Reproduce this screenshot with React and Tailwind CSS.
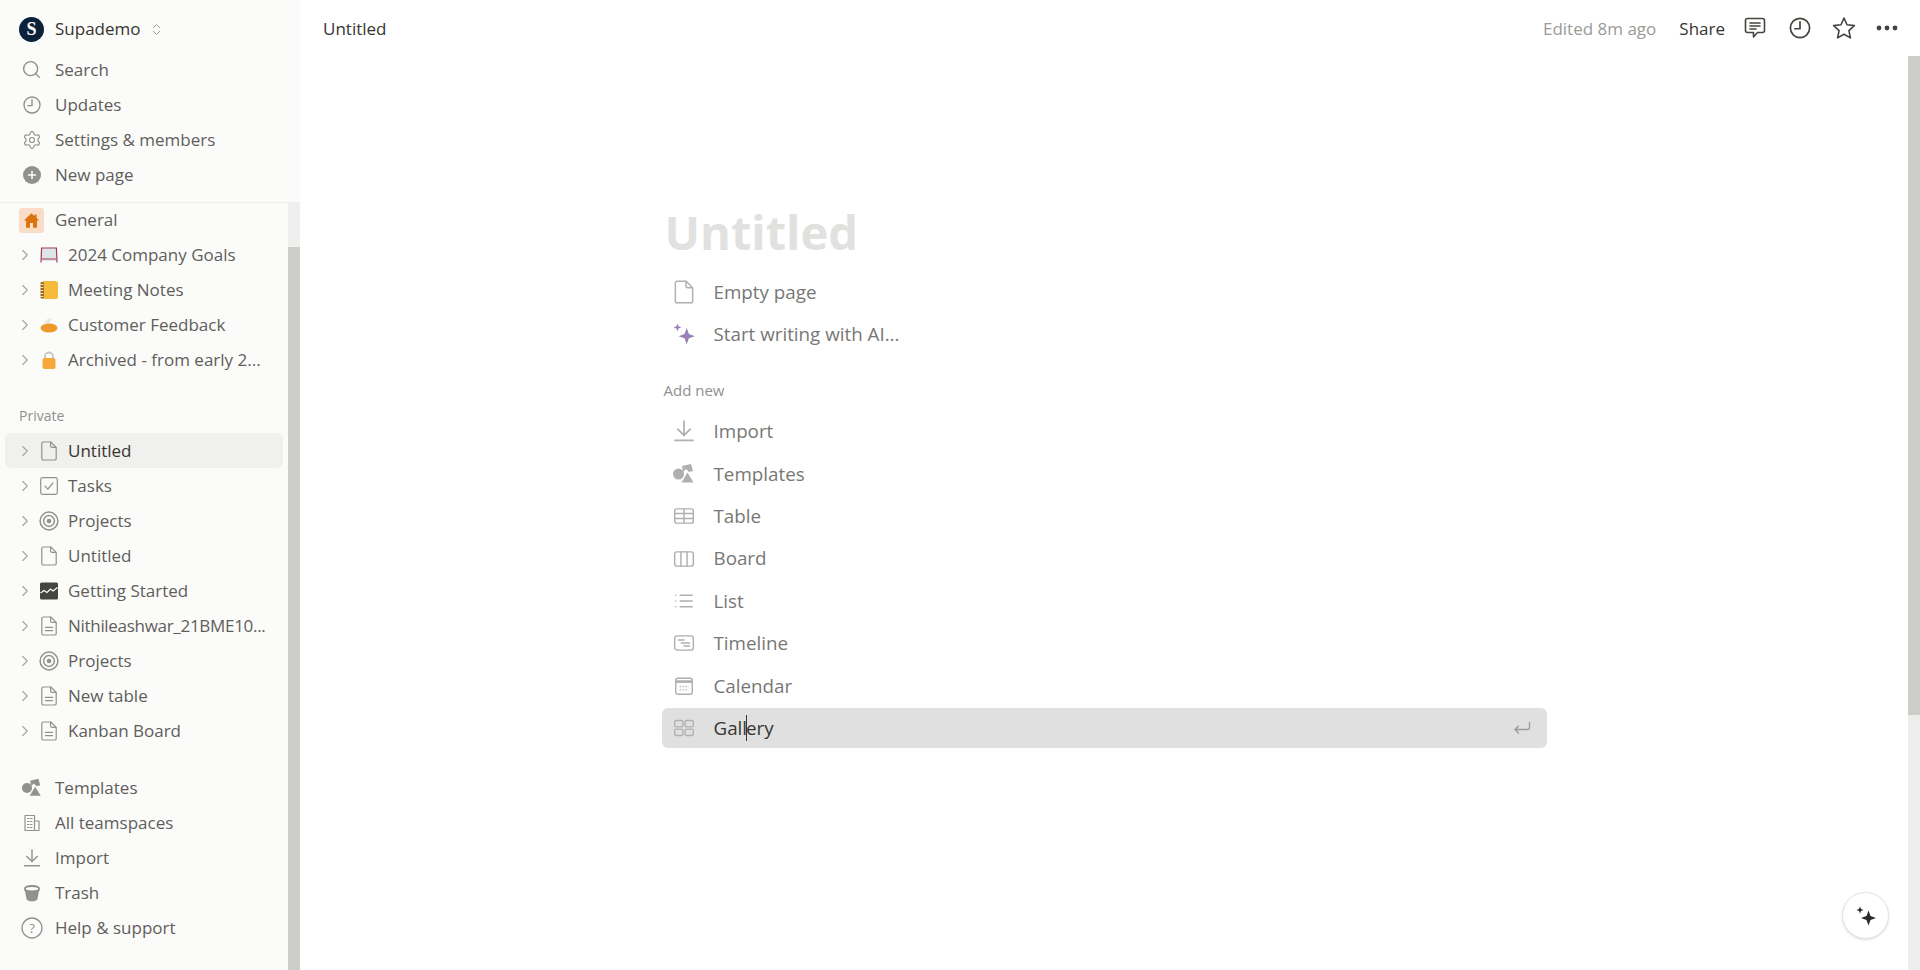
import { ChevronRight, ChevronsUpDown, Search, Settings, Plus } from 'lucide-react';

const FONT = "font-['Open_Sans',sans-serif]";

function Svg({ size = 20, className = '', children, fill = 'none', sw = 1.4 }) {
  return (
    <svg width={size} height={size} viewBox="0 0 20 20" fill={fill} stroke={fill === 'none' ? 'currentColor' : 'none'} strokeWidth={sw} strokeLinecap="round" strokeLinejoin="round" className={className}>
      {children}
    </svg>
  );
}

const ClockIcon = (p) => (
  <Svg {...p}><circle cx="10" cy="10" r="8" /><path d="M10 4.800V10.600H5.800" /></Svg>
);
const PageIcon = (p) => (
  <Svg {...p} sw={1.2}><path d="M2.800 2.600c0-1 .6-1.600 1.600-1.600h7.400l5.400 5.400v11c0 1-.6 1.600-1.600 1.600H4.400c-1 0-1.600-.6-1.600-1.600z" /><path d="M11.600 1.200v3.600c0 1 .6 1.600 1.600 1.600h3.800" /></Svg>
);
const PageTextIcon = (p) => (
  <Svg {...p} sw={1.2}><path d="M2.800 2.600c0-1 .6-1.600 1.600-1.600h7.400l5.400 5.400v11c0 1-.6 1.600-1.600 1.600H4.400c-1 0-1.600-.6-1.600-1.600z" /><path d="M11.600 1.200v3.600c0 1 .6 1.600 1.600 1.600h3.800M6.400 11.400h7.200M6.400 14.600h7.200" /></Svg>
);
const TaskIcon = (p) => (
  <Svg {...p} sw={1.2}><rect x="1.700" y="1.700" width="16.600" height="16.600" rx="1.800" /><path d="M6 10.200l2.800 3 5-6.200" /></Svg>
);
const TargetIcon = (p) => (
  <Svg {...p} sw={1.500}><circle cx="10" cy="10" r="8.900" /><circle cx="10" cy="10" r="5.400" /><circle cx="10" cy="10" r="2.300" fill="currentColor" stroke="none" /></Svg>
);
const ChartIcon = () => (
  <svg width="20" height="20" viewBox="0 0 20 20">
    <rect x="1" y="1.500" width="18" height="17" rx="1.500" fill="#45443f" />
    <path d="M1.500 12l3.500-2.500 3 2 3.500-3.500 2.500 2 4.500-3.500" fill="none" stroke="#fff" strokeWidth="1.200" />
  </svg>
);
const GoalIcon = () => (
  <svg width="20" height="20" viewBox="0 0 20 20">
    <path d="M2.500 3h15v13h-15z" fill="#dde4ea" />
    <path d="M2 17.500L2.600 3H17.400L18 17.500M3 14h14" fill="none" stroke="#a8384f" strokeWidth="1.200" />
  </svg>
);
const NotebookIcon = () => (
  <svg width="20" height="20" viewBox="0 0 20 20">
    <rect x="3" y="1" width="16" height="18" rx="2.500" fill="#f7bb3c" />
    <rect x="1.500" y="2" width="3.500" height="16.500" rx="1" fill="#9c6a22" />
    <path d="M1 4.500h3.500M1 7.500h3.500M1 10.500h3.500M1 13.500h3.500M1 16.500h3.500" stroke="#f3dfb4" strokeWidth="1" />
  </svg>
);
const PieIcon = () => (
  <svg width="20" height="20" viewBox="0 0 20 20">
    <path d="M5 8c1-3 5-5 9-5.500C12 4 11 6 11 8z" fill="#e9e8e4" />
    <ellipse cx="10" cy="13" rx="8.500" ry="4.500" fill="#eb9a2b" />
  </svg>
);
const LockIcon = () => (
  <svg width="20" height="20" viewBox="0 0 20 20">
    <path d="M6 9V6.500a4 4 0 0 1 8 0V9" fill="none" stroke="#c9c6bd" strokeWidth="1.800" />
    <rect x="3.500" y="8" width="13" height="11" rx="2" fill="#f6a93b" />
  </svg>
);
const HomeIcon = () => (
  <svg width="17" height="17" viewBox="0 0 20 20" fill="#d9730d">
    <path d="M10 1.500L1 10h2.600v8.500h4.600V13h3.600v5.500h4.600V10H19l-3-2.800V3h-2.400v1.900z" />
  </svg>
);
const PlusCircle = () => (
  <div className="flex h-[18px] w-[18px] items-center justify-center rounded-full bg-[#91918e]">
    <Plus size={12} strokeWidth={3} className="text-white" />
  </div>
);
const TemplatesIcon = ({ size = 24 }) => (
  <svg width={size} height={size} viewBox="0 0 24 24" fill="currentColor">
    <circle cx="6.500" cy="12" r="5.500" />
    <path d="M10 4l9-2 2 7-4 1-3-3-3 3z" />
    <path d="M15.500 10.500l6 10h-12z" />
  </svg>
);
const BuildingIcon = () => (
  <Svg sw={1.200}><path d="M3 2.500h9.500v15H3zM12.500 8H17v9.500h-4.500M5.500 5.500h1.500M8.500 5.500H10M5.500 8.500h1.500M8.500 8.500H10M5.500 11.500h1.500M8.500 11.500H10M5.500 14.500h1.500M8.500 14.500H10" /></Svg>
);
const ImportIcon = (p) => (
  <Svg {...p}><path d="M10 1.800v11.600M4.800 8.400L10 13.600l5.200-5.200M2.500 17.800h15" /></Svg>
);
const TrashIcon = () => (
  <svg width="20" height="20" viewBox="0 0 20 20" fill="currentColor">
    <path d="M2 6c0-3 3.500-4 8-4s8 1 8 4c0 1-.4 1.600-1 2l-1.500 8c-.4 1.500-3 2.500-5.500 2.500S4.900 17.500 4.500 16L3 8c-.6-.4-1-1-1-2z" />
    <ellipse cx="10" cy="5.800" rx="6.300" ry="1.700" fill="#fbfbfa" />
  </svg>
);
const HelpIcon = () => (
  <svg width="22" height="22" viewBox="0 0 22 22" fill="none" stroke="currentColor" strokeWidth="1.300">
    <circle cx="11" cy="11" r="10" />
    <text x="11" y="15.500" textAnchor="middle" fontSize="13" fill="currentColor" stroke="none" fontFamily="Open Sans">?</text>
  </svg>
);
const Sparkles = ({ size = 24, color }) => (
  <svg width={size} height={size} viewBox="0 0 22 22" fill={color}>
    <path d="M13.500 5.500l2 5.500 5.500 2-5.500 2-2 5.500-2-5.500L6 13l5.500-2z" />
    <path d="M5 1.500l1 2.500 2.500 1-2.500 1L5 8.500 4 6 1.500 5 4 4z" />
  </svg>
);
const TableIcon = (p) => (
  <Svg {...p} sw={1.300}><rect x="1.500" y="3.500" width="17" height="13" rx="2" /><path d="M1.500 7.800h17M1.500 12.200h17M10 3.500v13" /></Svg>
);
const BoardIcon = (p) => (
  <Svg {...p} sw={1.300}><rect x="1.500" y="3.500" width="17" height="13" rx="2" /><path d="M7.200 3.500v13M12.800 3.500v13" /></Svg>
);
const ListIcon = (p) => (
  <Svg {...p} sw={1.300}><path d="M6.500 4.800h11M6.500 10h11M6.500 15.200h11M2.500 4.800h.1M2.500 10h.1M2.500 15.200h.1" /></Svg>
);
const TimelineIcon = (p) => (
  <Svg {...p} sw={1.300}><rect x="1.500" y="3.500" width="17" height="13" rx="2.500" /><path d="M5 7.200h5M7.500 10h7.500M10 12.800h5" /></Svg>
);
const CalendarIcon = ({ size = 22 }) => (
  <svg width={size} height={size} viewBox="0 0 20 20" fill="none" stroke="currentColor" strokeWidth="1.300">
    <rect x="2.500" y="3" width="15" height="14.500" rx="1.800" />
    <path d="M2.500 6h15" strokeWidth="2.400" />
    <path d="M6 10.500h8M6 13.500h8" strokeDasharray="1.200 1.400" />
  </svg>
);
const GalleryIcon = (p) => (
  <Svg {...p} sw={1.200}><rect x="1.500" y="3.200" width="7.500" height="5.800" rx="1.300" /><rect x="11" y="3.200" width="7.500" height="5.800" rx="1.300" /><rect x="1.500" y="11" width="7.500" height="5.800" rx="1.300" /><rect x="11" y="11" width="7.500" height="5.800" rx="1.300" /></Svg>
);

const topItems = [
  { label: 'Search', icon: <Search size={21} strokeWidth={1.6} /> },
  { label: 'Updates', icon: <ClockIcon /> },
  { label: 'Settings & members', icon: <Settings size={20} strokeWidth={1.4} /> },
  { label: 'New page', icon: <PlusCircle /> },
];

const teamPages = [
  { label: '2024 Company Goals', icon: <GoalIcon /> },
  { label: 'Meeting Notes', icon: <NotebookIcon /> },
  { label: 'Customer Feedback', icon: <PieIcon /> },
  { label: 'Archived - from early 2...', icon: <LockIcon /> },
];

const privatePages = [
  { label: 'Untitled', icon: <PageIcon />, active: true },
  { label: 'Tasks', icon: <TaskIcon /> },
  { label: 'Projects', icon: <TargetIcon /> },
  { label: 'Untitled', icon: <PageIcon /> },
  { label: 'Getting Started', icon: <ChartIcon /> },
  { label: 'Nithileashwar_21BME10...', icon: <PageTextIcon />, narrow: true },
  { label: 'Projects', icon: <TargetIcon /> },
  { label: 'New table', icon: <PageTextIcon /> },
  { label: 'Kanban Board', icon: <PageTextIcon /> },
];

const bottomItems = [
  { label: 'Templates', icon: <TemplatesIcon size={22} /> },
  { label: 'All teamspaces', icon: <BuildingIcon /> },
  { label: 'Import', icon: <ImportIcon /> },
  { label: 'Trash', icon: <TrashIcon /> },
  { label: 'Help & support', icon: <HelpIcon /> },
];

const addNew = [
  { label: 'Import', icon: <ImportIcon size={24} /> },
  { label: 'Templates', icon: <TemplatesIcon size={24} /> },
  { label: 'Table', icon: <TableIcon size={22} /> },
  { label: 'Board', icon: <BoardIcon size={22} /> },
  { label: 'List', icon: <ListIcon size={22} /> },
  { label: 'Timeline', icon: <TimelineIcon size={22} /> },
  { label: 'Calendar', icon: <CalendarIcon size={22} /> },
];

function NavRow({ item }) {
  return (
    <div className="flex h-[35px] items-center pl-[14px] text-[17px] text-[#5f5e5b]">
      <span className="flex w-[25px] shrink-0 items-center justify-center text-[#91918e]">{item.icon}</span>
      <span className="ml-[11px] whitespace-nowrap">{item.label}</span>
    </div>
  );
}

function PageRow({ item }) {
  return (
    <div className={`flex h-[35px] items-center rounded-md pl-[11px] text-[17px] ${item.active ? 'bg-[#f0f0ee] font-medium text-[#37352f]' : 'text-[#5f5e5b]'}`}>
      <ChevronRight size={18} strokeWidth={1.5} className="shrink-0 text-[#a5a4a1]" />
      <span className="ml-[4px] flex w-[22px] shrink-0 items-center justify-center text-[#91918e]">{item.icon}</span>
      <span className={`ml-[8px] whitespace-nowrap ${item.narrow ? 'tracking-[-0.3px]' : ''}`}>{item.label}</span>
    </div>
  );
}

function AddRow({ item, selected }) {
  return (
    <div className={`flex h-10 items-center rounded-md pl-[10px] pr-[15px] text-[18.8px] ${selected ? 'bg-[#e0e0e0] text-[#37352f]' : 'text-[#787774]'}`}>
      <span className="flex w-[24px] shrink-0 items-center justify-center text-[#afafad]">{item.icon}</span>
      <span className="ml-[18px] flex-1">{item.label}</span>
      {selected && (
        <svg width="20" height="20" viewBox="0 0 20 20" fill="none" stroke="#9b9a97" strokeWidth="1.300" strokeLinecap="round" strokeLinejoin="round">
          <path d="M17.500 4.500v5c0 1.200-.8 2-2 2H3M3 11.500l3.500-3.500M3 11.500l3.500 3.500" />
        </svg>
      )}
    </div>
  );
}

export default function App() {
  return (
    <div className={`flex h-[970px] w-[1920px] overflow-hidden bg-white ${FONT}`}>
      <aside className="flex w-[300px] shrink-0 flex-col bg-[#fbfbfa]">
        <div className="border-b border-[#eeeeec] px-[5px] pt-[11px] pb-[10px]">
          <div className="mb-[5px] flex h-[36px] items-center pl-[14px] text-[17px] font-medium text-[#37352f]">
            <span className="flex h-[25px] w-[25px] items-center justify-center rounded-full bg-[#0b2238] font-['Liberation_Serif',serif] text-[18px] font-bold text-white">S</span>
            <span className="ml-[11px]">Supademo</span>
            <ChevronsUpDown size={15} strokeWidth={1.5} className="ml-[8px] text-[#91918e]" />
          </div>
          {topItems.map((item) => <NavRow key={item.label} item={item} />)}
        </div>
        <div className="flex min-h-0 flex-1">
          <div className="w-[288px] shrink-0 px-[5px]">
            <div className="flex h-[34px] items-center pl-[14px] text-[17px] text-[#5f5e5b]">
              <span className="flex h-[25px] w-[25px] items-center justify-center rounded-[3px] bg-[#fbdcc6]"><HomeIcon /></span>
              <span className="ml-[11px]">General</span>
            </div>
            {teamPages.map((item) => <PageRow key={item.label} item={item} />)}
            <div className="mt-[21px] flex h-[35px] items-center pl-[14px] text-[14px] text-[#91918e]">Private</div>
            {privatePages.map((item, i) => <PageRow key={i} item={item} />)}
            <div className="mt-[22px]">
              {bottomItems.map((item) => <NavRow key={item.label} item={item} />)}
            </div>
          </div>
          <div className="flex w-[12px] flex-col">
            <div className="h-[44px] bg-[#efefed]" />
            <div className="flex-1 bg-[#cdccc8]" />
          </div>
        </div>
      </aside>

      <main className="relative flex min-w-0 flex-1 flex-col">
        <header className="flex h-[56px] items-center pl-[23px] pr-[21px] text-[17px] text-[#37352f]">
          <span className="mt-[2px] flex-1">Untitled</span>
          <span className="mt-[2px] text-[#9b9a97]">Edited 8m ago</span>
          <span className="mt-[2px] ml-[23px]">Share</span>
          <svg className="ml-[18px]" width="24" height="24" viewBox="0 0 24 24" fill="none" stroke="#45443f" strokeWidth="1.600" strokeLinecap="round" strokeLinejoin="round">
            <path d="M4.500 2.500h15c1.200 0 2 .8 2 2v10c0 1.200-.8 2-2 2h-5l-4 4.500v-4.500h-6c-1.200 0-2-.8-2-2v-10c0-1.200.8-2 2-2zM7 7h10M7 10h10M7 13h6" />
          </svg>
          <span className="ml-[21px] text-[#45443f]"><ClockIcon size={24} /></span>
          <svg className="ml-[20px]" width="24" height="24" viewBox="0 0 24 24" fill="none" stroke="#45443f" strokeWidth="1.600" strokeLinejoin="round">
            <path d="M12 2l3 6.800 7.400.8-5.500 5 1.500 7.300-6.400-3.700-6.400 3.700 1.500-7.300-5.500-5 7.400-.8z" />
          </svg>
          <svg className="ml-[19px]" width="24" height="24" viewBox="0 0 24 24" fill="#45443f">
            <circle cx="4" cy="12" r="2.400" /><circle cx="12" cy="12" r="2.400" /><circle cx="20" cy="12" r="2.400" />
          </svg>
        </header>

        <div className="flex min-h-0 flex-1">
          <div className="min-w-0 flex-1 pt-[146px]">
            <div className="mx-auto w-[885px]">
              <h1 className="h-[60px] pl-[3px] text-[47px] leading-[60px] font-bold text-[#e1e1e0]">Untitled</h1>
              <div className="mt-[10px] flex flex-col gap-[2.4px]">
                <AddRow item={{ label: 'Empty page', icon: <PageIcon size={24} /> }} />
                <AddRow item={{ label: 'Start writing with AI...', icon: <Sparkles color="#9a7fb8" /> }} />
              </div>
              <div className="mt-[21px] flex h-[30px] items-center pl-[2px] text-[15px] text-[#91918e]">Add new</div>
              <div className="mt-[6px] flex flex-col gap-[2.4px]">
                {addNew.map((item) => <AddRow key={item.label} item={item} />)}
                <AddRow item={{ label: <>Gall<span className="-mx-px border-l border-[#37352f]" />ery</>, icon: <GalleryIcon size={22} /> }} selected />
              </div>
            </div>
          </div>
          <div className="flex w-[12px] flex-col bg-[#ededeb]">
            <div className="h-[659px] bg-[#cdccc8]" />
          </div>
        </div>

        <button className="absolute right-[31px] bottom-[31px] flex h-[47px] w-[47px] items-center justify-center rounded-full border border-[#e4e4e2] bg-white shadow-sm">
          <Sparkles size={22} color="#2b2a27" />
        </button>
      </main>
    </div>
  );
}
